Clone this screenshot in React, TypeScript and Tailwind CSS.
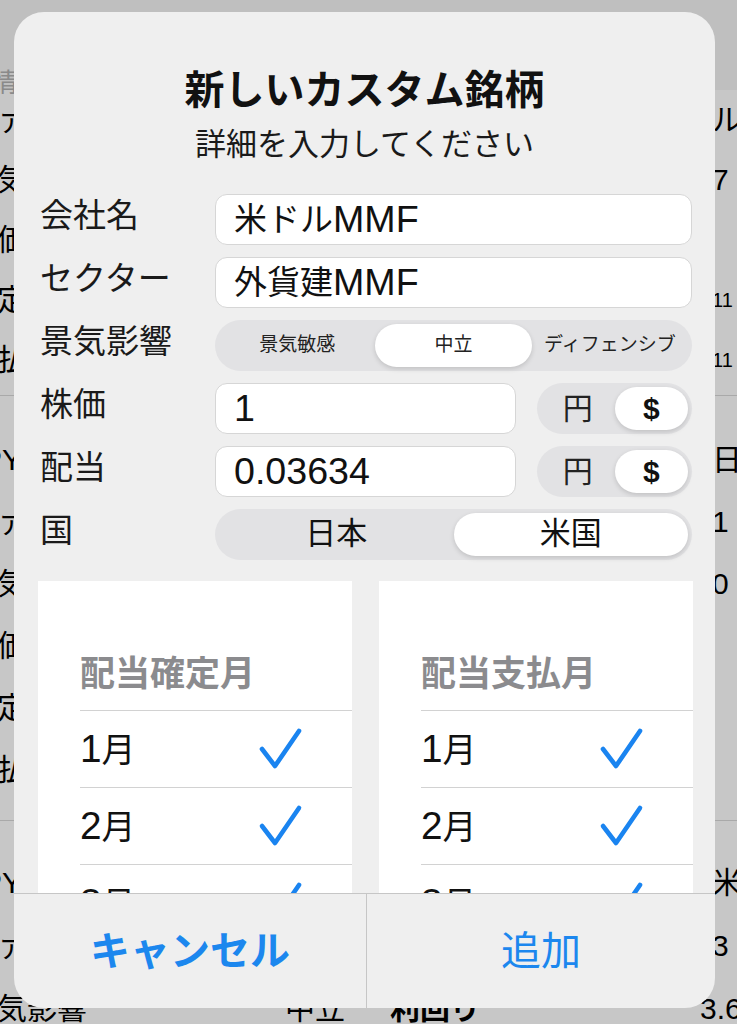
import React from "react";

type BgRowProps = {
  h: string;
  label?: string;
  mid?: string;
  rlabel?: string;
  value?: string;
  vclass?: string;
};

function BgRow({ h, label, mid, rlabel, value, vclass }: BgRowProps) {
  return (
    <div className={`grid grid-cols-[285px_105px_322px_1fr] items-center ${h}`}>
      <div className="ml-[-33px] whitespace-nowrap">{label}</div>
      <div className="whitespace-nowrap">{mid}</div>
      <div className="whitespace-nowrap font-bold">{rlabel}</div>
      <div className={`whitespace-nowrap ${vclass ?? ""}`}>{value}</div>
    </div>
  );
}

function Check() {
  return (
    <svg width="46" height="44" viewBox="-3 -3 46 44" fill="none">
      <polyline
        points="2,19 15,36 39,1"
        stroke="#1a84f0"
        strokeWidth="4.6"
        strokeLinecap="round"
        strokeLinejoin="round"
      />
    </svg>
  );
}

function Lat({ children }: { children: React.ReactNode }) {
  return <span className="text-[1.14em]">{children}</span>;
}

function MonthList({ title }: { title: string }) {
  const months = ["1", "2", "3", "4", "5", "6"];
  return (
    <div className="flex flex-col bg-white">
      <div className="ml-[42px] flex h-[130px] items-end border-b border-[#d2d2d2] pb-[15px]">
        <span className="whitespace-nowrap text-[35px] font-bold leading-[42px] text-[#8b8b8e]">{title}</span>
      </div>
      {months.map((m) => (
        <div
          key={m}
          className="ml-[42px] flex h-[77px] items-center justify-between border-b border-[#d2d2d2] pr-[49px]"
        >
          <span className="text-[34px] leading-[40px] text-[#111]">
            <Lat>{m}</Lat>月
          </span>
          <Check />
        </div>
      ))}
    </div>
  );
}

function Label({ children }: { children: React.ReactNode }) {
  return (
    <div className="w-[175px] shrink-0 whitespace-nowrap text-[33px] leading-[44px] text-[#1a1a1a]">
      {children}
    </div>
  );
}

function TextBox({ children, className }: { children: React.ReactNode; className: string }) {
  return (
    <div
      className={`flex h-[51px] items-center whitespace-nowrap rounded-[12px] border border-[#d6d6d6] bg-white pl-[18px] text-[33px] text-[#111] ${className}`}
    >
      {children}
    </div>
  );
}

function Pill({ children, className }: { children: React.ReactNode; className?: string }) {
  return (
    <div
      className={`flex flex-1 items-center justify-center rounded-full bg-white shadow-[0_2px_5px_rgba(0,0,0,0.15)] ${className ?? ""}`}
    >
      {children}
    </div>
  );
}

export default function App() {
  return (
    <div className="relative h-[1024px] w-full overflow-hidden bg-[#c7c7c7] font-['Liberation_Sans','Noto_Sans_CJK_JP',sans-serif] text-black">
      {/* background page (dimmed) */}
      <div className="flex flex-col text-[30px] leading-none">
        <div className="flex h-[90px] items-end bg-[#bfbfbf]">
          <span className="ml-[-8px] translate-y-[6px] text-[26px] text-[#8a8a8a]">情報</span>
        </div>
        <BgRow h="h-[60px]" label="ファンド" value="ル/円" />
        <BgRow h="h-[60px]" label="景気影響" value="7" />
        <BgRow h="h-[60px]" label="株価" value="" />
        <BgRow h="h-[60px]" label="確定月" value="11" vclass="text-[20px]" />
        <BgRow h="h-[60px]" label="支払月" value="11" vclass="text-[20px]" />
        <div className="h-[5px]" />
        <div className="h-px bg-[#a9a9a9]" />
        <div className="h-[33px]" />
        <BgRow h="h-[62px]" label="JPY(円建)" value="日" />
        <BgRow h="h-[62px]" label="ファンド" value="1" />
        <BgRow h="h-[62px]" label="景気影響" value="0" />
        <BgRow h="h-[62px]" label="株価" value="" />
        <BgRow h="h-[62px]" label="確定月" value="" />
        <BgRow h="h-[62px]" label="支払月" value="" />
        <div className="h-[19px]" />
        <div className="h-px bg-[#a9a9a9]" />
        <div className="h-[30px]" />
        <BgRow h="h-[63px]" label="JPY(円建)" value="米" />
        <BgRow h="h-[63px]" label="ファンド" value="3" />
        <BgRow h="h-[63px]" label="景気影響" mid="中立" rlabel="利回り" value="3.6" vclass="ml-[-12px]" />
      </div>

      {/* dialog */}
      <div className="absolute left-[14px] top-[12px] flex h-[996px] w-[701px] flex-col overflow-hidden rounded-[30px] bg-[#efefef]">
        <div className="flex h-[881px] flex-col overflow-hidden pt-[54px]">
          <div className="text-center text-[40px] font-bold leading-[48px] text-[#111]">新しいカスタム銘柄</div>
          <div className="mt-[11px] text-center text-[31px] leading-[40px] text-[#1a1a1a]">詳細を入力してください</div>

          <div className="mt-[29px] flex flex-col gap-[12px] pl-[26px] pr-[23px]">
            <div className="flex items-start">
              <Label>会社名</Label>
              <TextBox className="flex-1">
                米ドル<Lat>MMF</Lat>
              </TextBox>
            </div>
            <div className="flex items-start">
              <Label>セクター</Label>
              <TextBox className="flex-1">
                外貨建<Lat>MMF</Lat>
              </TextBox>
            </div>
            <div className="flex items-start">
              <Label>景気影響</Label>
              <div className="flex h-[51px] flex-1 rounded-full bg-[#e2e2e4] p-[4px] text-[19px] text-[#222]">
                <div className="flex flex-1 items-center justify-center">景気敏感</div>
                <Pill>中立</Pill>
                <div className="flex flex-1 items-center justify-center whitespace-nowrap">ディフェンシブ</div>
              </div>
            </div>
            <div className="flex items-start">
              <Label>株価</Label>
              <TextBox className="w-[301px]">
                <Lat>1</Lat>
              </TextBox>
              <div className="ml-[21px] flex h-[51px] flex-1 rounded-full bg-[#e2e2e4] p-[4px]">
                <div className="flex flex-1 items-center justify-center text-[30px] text-[#222]">円</div>
                <Pill className="text-[30px] font-bold text-[#111]">$</Pill>
              </div>
            </div>
            <div className="flex items-start">
              <Label>配当</Label>
              <TextBox className="w-[301px]">
                <Lat>0.03634</Lat>
              </TextBox>
              <div className="ml-[21px] flex h-[51px] flex-1 rounded-full bg-[#e2e2e4] p-[4px]">
                <div className="flex flex-1 items-center justify-center text-[30px] text-[#222]">円</div>
                <Pill className="text-[30px] font-bold text-[#111]">$</Pill>
              </div>
            </div>
            <div className="flex items-start">
              <Label>国</Label>
              <div className="flex h-[51px] flex-1 rounded-full bg-[#e2e2e4] p-[4px] text-[31px] text-[#111]">
                <div className="flex flex-1 items-center justify-center">日本</div>
                <Pill>米国</Pill>
              </div>
            </div>
          </div>

          <div className="mt-[21px] grid grid-cols-2 gap-[27px] pl-[24px] pr-[22px]">
            <MonthList title="配当確定月" />
            <MonthList title="配当支払月" />
          </div>
        </div>

        <div className="grid h-[115px] grid-cols-[352px_1fr] border-t border-[#c6c6c6] text-[40px] text-[#1c87ee]">
          <div className="flex items-center justify-center font-bold">キャンセル</div>
          <div className="flex items-center justify-center border-l border-[#c6c6c6]">追加</div>
        </div>
      </div>
    </div>
  );
}
